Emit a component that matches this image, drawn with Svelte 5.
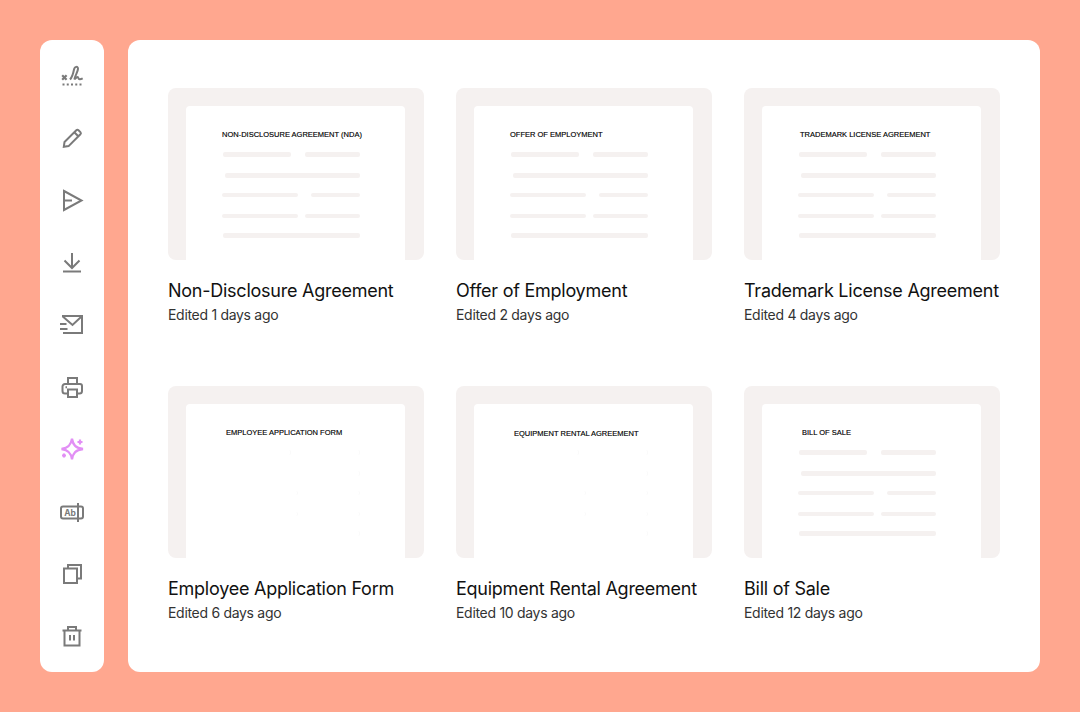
<script lang="ts">
	const docs = [
		{ name: 'Non-Disclosure Agreement', heading: 'NON-DISCLOSURE AGREEMENT (NDA)', inset: 36, age: 1 },
		{ name: 'Offer of Employment', heading: 'OFFER OF EMPLOYMENT', inset: 36, age: 2 },
		{ name: 'Trademark License Agreement', heading: 'TRADEMARK LICENSE AGREEMENT', inset: 38, age: 4 },
		{ name: 'Employee Application Form', heading: 'EMPLOYEE APPLICATION FORM', inset: 40, age: 6, blank: true },
		{ name: 'Equipment Rental Agreement', heading: 'EQUIPMENT RENTAL AGREEMENT', inset: 40, age: 10, blank: true, lower: true },
		{ name: 'Bill of Sale', heading: 'BILL OF SALE', inset: 40, age: 12 }
	];

	// placeholder lines on the paper: top margin, height, left inset, gap, segment widths
	const lines = [
		{ mt: 13, h: 5, left: 37, gap: 14, segs: [68, 55] },
		{ mt: 16, h: 5, left: 39, gap: 0, segs: [135] },
		{ mt: 15, h: 4, left: 36, gap: 13, segs: [76, 49] },
		{ mt: 17, h: 4, left: 36, gap: 7, segs: [76, 55] },
		{ mt: 15, h: 5, left: 37, gap: 0, segs: [137] }
	];
</script>

<div class="page">
	<nav class="toolbar">
		<svg viewBox="0 0 24 24" class="icon">
			<path d="M2.200 11.300l4.400 4.400M6.600 11.300l-4.400 4.400" stroke-width="2.200" />
			<path d="M10 15.500c2-2 3.200-6 4-10 .7-3.300 4.200-3.500 4-.6-.2 3.200-3 6.500-3.600 10.600 1.500-2 3.600-3.400 4-1.600.4 1.600 1.800 1.700 4.300.4" stroke-width="2" />
			<path d="M2.500 20.500h19" stroke-width="2" stroke-dasharray="2 2.250" />
		</svg>
		<svg viewBox="0 0 24 24" class="icon">
			<path d="M3.800 20.800l.7-4.800L16.300 4.200a1.600 1.600 0 0 1 2.200 0l1.900 1.900a1.600 1.600 0 0 1 0 2.200L8.600 20.100z" />
			<path d="M14.300 6.200l4 4" />
		</svg>
		<svg viewBox="0 0 24 24" class="icon">
			<path d="M4 3L21.500 12.500 4 22z" />
			<path d="M4 12.500h8" />
		</svg>
		<svg viewBox="0 0 24 24" class="icon">
			<path d="M12 2v15M4.500 9.500L12 17l7.500-7.500" />
			<path d="M3 20.500h18" />
		</svg>
		<svg viewBox="0 0 24 24" class="icon">
			<path d="M2 3h20v17H3" />
			<path d="M2.500 3.300L12.500 12l9.300-8.700" />
			<path d="M0 11h6.500M0 16h7.500" />
		</svg>
		<svg viewBox="0 0 24 24" class="icon">
			<path d="M8 9V3h9v6" />
			<path d="M8 18.500H5a2.500 2.500 0 0 1-2.500-2.500v-4.500A2.500 2.500 0 0 1 5 9h15a2 2 0 0 1 2 2v5a2.500 2.500 0 0 1-2.500 2.500H17" />
			<rect x="8" y="14.500" width="9" height="7.500" />
			<path d="M5.500 12.300h1.500" />
		</svg>
		<svg viewBox="0 0 24 24" class="icon spark">
			<path d="M12 1.800c1 6.400 3.700 9.200 11 10.200-7.300 1-10 3.800-11 10.200-1-6.400-3.700-9.200-10.500-10.200 6.800-1 9.500-3.800 10.500-10.200z" stroke-width="2.300" />
			<path d="M20 2.500v5M17.500 5h5M4 16.500v4M2 18.500h4" stroke-width="2.200" />
		</svg>
		<svg viewBox="0 0 24 24" class="icon">
			<rect x="1" y="6.500" width="22" height="12" rx="2" />
			<path d="M18 3v19" />
			<text x="10" y="15.500" class="ab">Ab</text>
		</svg>
		<svg viewBox="0 0 24 24" class="icon">
			<rect x="4" y="6.500" width="13" height="14.500" />
			<path d="M8 6.500V3h13v13.500h-4" />
		</svg>
		<svg viewBox="0 0 24 24" class="icon">
			<path d="M2.500 6.500h19M8 6.500V3h8v3.500M4.500 6.500V21.500h15V6.500M10 11v5.500M14 11v5.500" />
		</svg>
	</nav>

	<main class="panel">
		<div class="grid">
			{#each docs as doc}
				<article class="card">
					<div class="preview">
						<div class="paper" class:blank={doc.blank}>
							<div class="heading" class:lower={doc.lower} style="padding-left: {doc.inset}px">{doc.heading}</div>
							{#each lines as line}
								<div
									class="line"
									style="margin-top: {line.mt}px; height: {line.h}px; padding-left: {line.left}px; gap: {line.gap}px"
								>
									{#each line.segs as width}
										<span class="seg" style="width: {width}px"></span>
									{/each}
								</div>
							{/each}
						</div>
					</div>
					<h3 class="name">{doc.name}</h3>
					<p class="meta">Edited {doc.age} days ago</p>
				</article>
			{/each}
		</div>
	</main>
</div>

<style>
	:global(body) {
		margin: 0;
		background: #ffa78f;
	}

	.page {
		display: flex;
		gap: 24px;
		height: 712px;
		box-sizing: border-box;
		padding: 40px;
		font-family: Inter, 'Liberation Sans', sans-serif;
	}

	.toolbar {
		width: 64px;
		flex: none;
		box-sizing: border-box;
		padding: 24px 0;
		display: flex;
		flex-direction: column;
		align-items: center;
		justify-content: space-between;
		background: #fff;
		border-radius: 12px;
	}

	.icon {
		width: 24px;
		height: 24px;
		fill: none;
		stroke: #7a7a7a;
		stroke-width: 2;
	}

	.spark {
		stroke: #e28ff5;
	}

	.ab {
		font-family: Inter, 'Liberation Sans', sans-serif;
		font-size: 8.500px;
		font-weight: 700;
		text-anchor: middle;
		fill: #7a7a7a;
		stroke: none;
	}

	.panel {
		flex: 1;
		box-sizing: border-box;
		padding: 48px 40px;
		background: #fff;
		border-radius: 12px;
	}

	.grid {
		display: grid;
		grid-template-columns: repeat(3, 256px);
		column-gap: 32px;
		row-gap: 61px;
	}

	.preview {
		height: 172px;
		box-sizing: border-box;
		padding: 18px 19px 0 18px;
		background: #f5f1f0;
		border-radius: 8px;
		overflow: hidden;
	}

	.paper {
		height: 100%;
		padding-top: 24px;
		box-sizing: border-box;
		background: #fff;
		border-radius: 4px 4px 0 0;
	}

	.heading {
		height: 10px;
		margin-bottom: -1px;
		font-family: 'Liberation Sans', Arial, sans-serif;
		font-size: 7.500px;
		line-height: 10px;
		color: #000;
		-webkit-text-stroke: 0.15px #000;
		white-space: nowrap;
	}

	.heading.lower {
		position: relative;
		top: 1px;
	}

	.line {
		display: flex;
	}

	.seg {
		height: 100%;
		background: #f5f1f0;
		border-radius: 2px;
	}

	.blank .seg {
		background: #fff;
		border-right: 1px solid #fafafa;
		box-sizing: border-box;
	}

	.name {
		margin: 19px 0 0;
		font-size: 18px;
		line-height: 24px;
		font-weight: 400;
		letter-spacing: -0.25px;
		color: #111;
		white-space: nowrap;
	}

	.meta {
		margin: 2px 0 0;
		font-size: 14px;
		line-height: 20px;
		letter-spacing: -0.3px;
		color: #333;
	}
</style>
